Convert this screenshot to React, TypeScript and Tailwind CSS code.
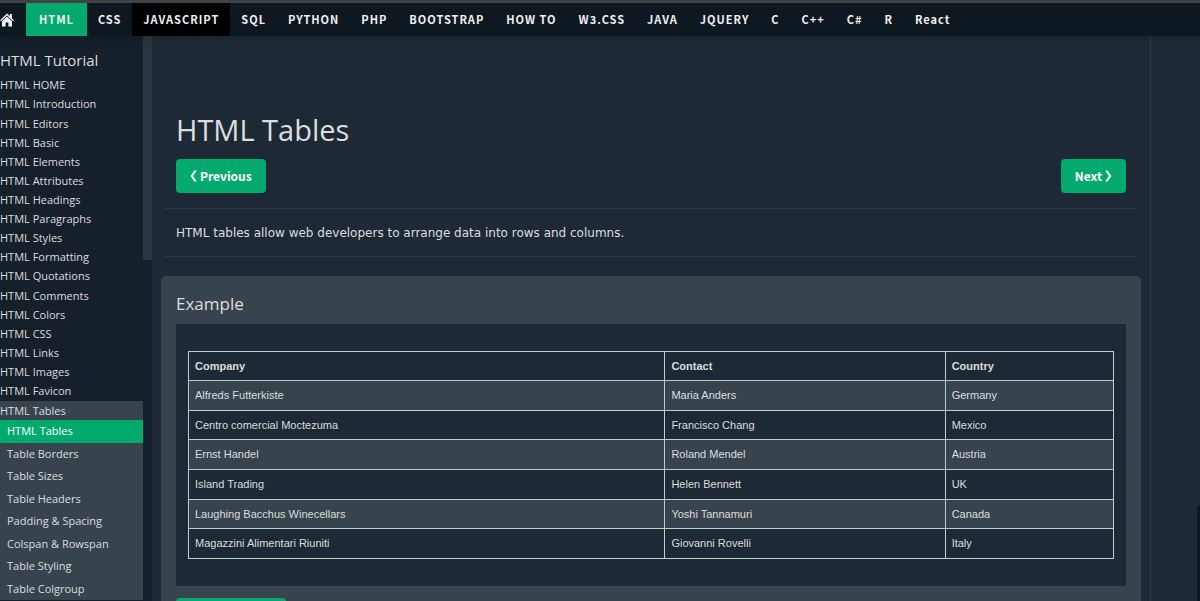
import clsx from 'clsx';

const topics = [
    'HTML', 'CSS', 'JAVASCRIPT', 'SQL', 'PYTHON', 'PHP', 'BOOTSTRAP', 'HOW TO', 'W3.CSS',
    'JAVA', 'JQUERY', 'C', 'C++', 'C#', 'R', 'React',
];

const chapters = [
    'HTML HOME', 'HTML Introduction', 'HTML Editors', 'HTML Basic', 'HTML Elements',
    'HTML Attributes', 'HTML Headings', 'HTML Paragraphs', 'HTML Styles', 'HTML Formatting',
    'HTML Quotations', 'HTML Comments', 'HTML Colors', 'HTML CSS', 'HTML Links', 'HTML Images',
    'HTML Favicon',
];

const tablePages = [
    'HTML Tables', 'Table Borders', 'Table Sizes', 'Table Headers', 'Padding & Spacing',
    'Colspan & Rowspan', 'Table Styling', 'Table Colgroup',
];

const companies = [
    ['Alfreds Futterkiste', 'Maria Anders', 'Germany'],
    ['Centro comercial Moctezuma', 'Francisco Chang', 'Mexico'],
    ['Ernst Handel', 'Roland Mendel', 'Austria'],
    ['Island Trading', 'Helen Bennett', 'UK'],
    ['Laughing Bacchus Winecellars', 'Yoshi Tannamuri', 'Canada'],
    ['Magazzini Alimentari Riuniti', 'Giovanni Rovelli', 'Italy'],
];

function HomeIcon() {
    return (
        <svg width="14" height="14" viewBox="0 0 14 14" fill="currentColor" aria-hidden="true">
            <path d="M7 0.4L9.8 3.2V1H11.9V5.2L14 7.3L13 8.3L7 2.4L1 8.3L0 7.3Z"/>
            <path d="M7 3.4L12 8.3V13.4H8.4V9.4H5.6V13.4H2V8.3Z"/>
        </svg>
    );
}

function TopBar() {
    return (
        <nav className="z-10 flex h-9 shrink-0 items-stretch border-t-3 border-[#414246] bg-[#0d1821] font-['Noto_Sans_CJK_SC',sans-serif] text-[11px] font-bold tracking-[1px] text-[#f1f1f1] shadow-md">
            <a href="#home" aria-label="Home" className="flex w-[26px] items-center">
                <HomeIcon/>
            </a>
            {topics.map((topic) => (
                <a
                    key={topic}
                    href={`#${topic}`}
                    className={clsx(
                        'flex items-center whitespace-nowrap',
                        topic === 'HTML' ? 'bg-[#04aa6d] px-[13px]' : 'px-[11px]',
                        topic === 'JAVASCRIPT' && 'bg-black',
                    )}
                >
                    {topic}
                </a>
            ))}
        </nav>
    );
}

function Sidebar() {
    return (
        <aside className="flex w-[152px] shrink-0 bg-[#15202b] font-['Open_Sans',sans-serif] text-[11px] text-[#dddddd]">
            <div className="flex-1">
                <h2 className="pt-3 text-[15px] leading-6">HTML Tutorial</h2>
                <ul className="mt-1 grid h-[325px] auto-rows-fr">
                    {chapters.map((chapter) => (
                        <li key={chapter} className="flex items-center">
                            <a href="#chapter" className="whitespace-nowrap">{chapter}</a>
                        </li>
                    ))}
                </ul>
                <div className="bg-[#38444d]">
                    <a href="#tables" className="block leading-[19px]">HTML Tables</a>
                    <ul className="grid h-[180px] auto-rows-fr">
                        {tablePages.map((page, i) => (
                            <li key={page} className={clsx('flex items-center pl-[7px]', i === 0 && 'bg-[#04aa6d] text-white')}>
                                <a href="#page" className="whitespace-nowrap">{page}</a>
                            </li>
                        ))}
                    </ul>
                </div>
            </div>
            {/* scrollbar */}
            <div className="w-[9px]">
                <div className="h-56 bg-[#2a353f]"/>
            </div>
        </aside>
    );
}

function Chevron({flip = false}: {flip?: boolean}) {
    return (
        <svg width="7" height="12" viewBox="0 0 7 12" className={clsx(flip && 'rotate-180')} aria-hidden="true">
            <path d="M4.4 0.5H6.8L3.1 6L6.8 11.5H4.4L0.5 6Z" fill="currentColor"/>
        </svg>
    );
}

function ExampleTable() {
    return (
        <table className="h-[208px] w-full table-fixed border-collapse text-left font-['Liberation_Sans',sans-serif] text-[11px] text-[#dddddd]">
            <colgroup>
                <col className="w-[51.5%]"/>
                <col className="w-[30.3%]"/>
                <col/>
            </colgroup>
            <thead>
                <tr className="h-[29px]">
                    {['Company', 'Contact', 'Country'].map((head) => (
                        <th key={head} className="border border-[#c5cacd] px-1.5 font-bold">{head}</th>
                    ))}
                </tr>
            </thead>
            <tbody>
                {companies.map((row) => (
                    <tr key={row[0]} className="odd:bg-[#38444d]">
                        {row.map((cell) => (
                            <td key={cell} className="border border-[#c5cacd] px-1.5">{cell}</td>
                        ))}
                    </tr>
                ))}
            </tbody>
        </table>
    );
}

export default function App() {
    const pager = "flex h-[34px] items-center gap-[3px] rounded bg-[#04aa6d] px-[14px] font-['Noto_Sans_CJK_SC',sans-serif] text-xs font-bold text-white";

    return (
        <div className="flex h-screen flex-col overflow-hidden bg-[#1d2a35] text-[#dddddd]">
            <TopBar/>
            <div className="flex min-h-0 flex-1">
                <Sidebar/>
                <main className="min-w-0 flex-1 px-[9px]">
                    <h1 className="pt-[70px] pl-[15px] font-['Open_Sans',sans-serif] text-[29px] leading-[48px]">
                        HTML Tables
                    </h1>
                    <div className="mt-[5px] flex justify-between px-[15px]">
                        <button type="button" className={pager}>
                            <Chevron/>
                            Previous
                        </button>
                        <button type="button" className={pager}>
                            Next
                            <Chevron flip/>
                        </button>
                    </div>
                    <hr className="mx-[3px] mt-[15px] border-[#2c3943]"/>
                    <p className="px-[15px] pt-[14px] pb-[13px] font-['DejaVu_Sans',sans-serif] text-xs leading-5">
                        HTML tables allow web developers to arrange data into rows and columns.
                    </p>
                    <hr className="mx-[3px] border-[#2c3943]"/>
                    <section className="mt-[19px] rounded-[5px] bg-[#38444d] px-[15px] py-4">
                        <h3 className="font-['Open_Sans',sans-serif] text-[17px] leading-6">Example</h3>
                        <div className="mt-2 bg-[#1d2a35] px-3 py-[27px]">
                            <ExampleTable/>
                        </div>
                        <button type="button" aria-label="Try it Yourself" className="mt-3 block h-[34px] w-[110px] rounded bg-[#04aa6d]"/>
                    </section>
                </main>
                <aside className="flex w-[50px] shrink-0 items-end justify-end border-l border-[#2f3b45]">
                    <div className="h-24 w-[3px] rounded-tl bg-[#0d1821]"/>
                </aside>
            </div>
        </div>
    );
}
